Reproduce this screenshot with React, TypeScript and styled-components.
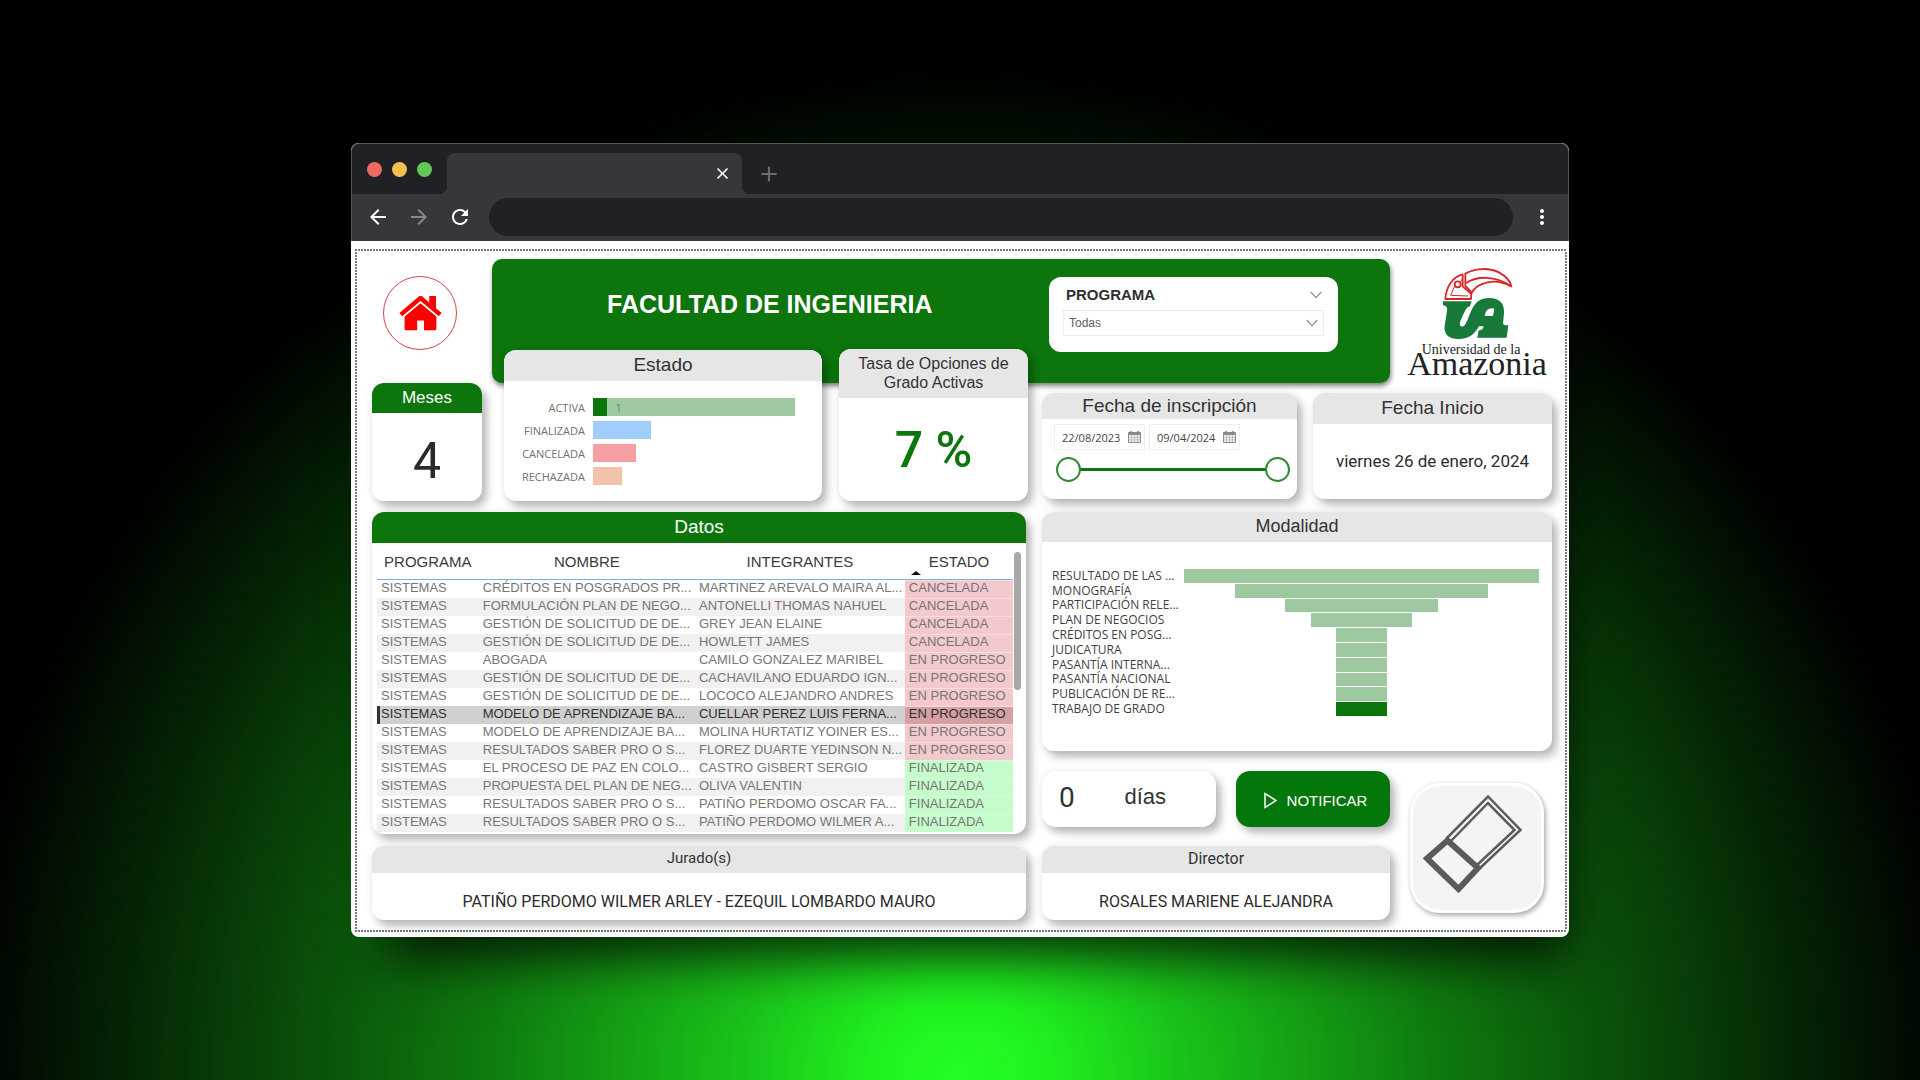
import React, { useState } from "react";
import styled, { createGlobalStyle, css } from "styled-components";
import { MdArrowBack, MdArrowForward, MdRefresh, MdMoreVert, MdClose, MdAdd } from "react-icons/md";

const SANS = `"Liberation Sans", Arial, sans-serif`;
const UI = `"Open Sans", "Noto Sans", sans-serif`;
const DIN = `Roboto, "Liberation Sans", sans-serif`;
const GREEN = "#0c750c";
const LIGHT_GREEN = "#9dc8a0";

const GlobalStyle = createGlobalStyle`
  * { box-sizing: border-box; }
  body { margin: 0; background: #000; font-family: ${SANS}; }
  button, input, select { font-family: inherit; margin: 0; padding: 0; border: 0; background: none; }
  button { cursor: pointer; }
`;

const Stage = styled.div`
  min-height: 100vh;
  display: flex;
  align-items: center;
  justify-content: center;
  background: radial-gradient(
    1000px 1010px at 50% 100%,
    #22ff22 0%,
    #20f320 8%,
    #19c019 23%,
    #0f7b0f 47%,
    #042404 84%,
    #000 100%
  );
`;

const Browser = styled.div`
  width: calc(100% - 64px);
  max-width: 1218px;
  border-radius: 8px;
  overflow: hidden;
  background: #fff;
  box-shadow: 16px 40px 50px -20px rgba(0, 0, 0, 0.8);
`;

const Chrome = styled.div`
  border: 1px solid #55565a;
  border-bottom: 0;
  border-radius: 8px 8px 0 0;
  background: #202124;
`;

const TabStrip = styled.div`
  height: 50px;
  padding-left: 15px;
  display: flex;
  align-items: flex-end;
`;

const Lights = styled.div`
  display: flex;
  gap: 10px;
  align-self: center;
  margin-right: 15px;
`;

const Light = styled.button<{ $color: string }>`
  width: 15px;
  height: 15px;
  border-radius: 50%;
  background: ${(p) => p.$color};
`;

const Tab = styled.div`
  position: relative;
  width: 295px;
  height: 41px;
  padding-right: 10px;
  display: flex;
  align-items: center;
  justify-content: flex-end;
  border-radius: 8px 8px 0 0;
  background: #36373a;
  &::before,
  &::after {
    content: "";
    position: absolute;
    bottom: 0;
    width: 8px;
    height: 8px;
  }
  &::before { left: -8px; background: radial-gradient(circle at 0 0, transparent 8px, #36373a 8px); }
  &::after { right: -8px; background: radial-gradient(circle at 100% 0, transparent 8px, #36373a 8px); }
`;

const ChromeButton = styled.button<{ $color?: string }>`
  display: flex;
  align-items: center;
  justify-content: center;
  color: ${(p) => p.$color ?? "#fff"};
`;

const NewTab = styled(ChromeButton)`
  height: 41px;
  margin-left: 14px;
`;

const Toolbar = styled.div`
  height: 47px;
  padding: 0 14px 2px;
  display: flex;
  align-items: center;
  gap: 17px;
  background: #36373a;
`;

const Address = styled.input`
  flex: 1;
  min-width: 0;
  height: 38px;
  padding: 0 18px;
  border-radius: 19px;
  background: #202124;
  color: #fff;
  outline: none;
`;

const Page = styled.main`
  padding: 8px 2px 5px 4px;
`;

const dotsX = "repeating-linear-gradient(90deg, #777 0 2px, #fff 2px 3px)";
const dotsY = "repeating-linear-gradient(180deg, #777 0 2px, #fff 2px 3px)";

const Report = styled.div`
  padding: 10px 15px 12px 17px;
  background:
    ${dotsX} top / 100% 2px no-repeat,
    ${dotsX} bottom / 100% 2px no-repeat,
    ${dotsY} left / 2px 100% no-repeat,
    ${dotsY} right / 2px 100% no-repeat,
    #fff;
`;

const Header = styled.header`
  display: grid;
  grid-template-columns: 96px 1fr 150px;
  align-items: start;
`;

const HomeButton = styled.button`
  width: 74px;
  height: 74px;
  margin: 17px auto 0;
  display: flex;
  align-items: center;
  justify-content: center;
  border: 1px solid #d9434c;
  border-radius: 50%;
  background: #fff;
`;

const shadow = css`
  box-shadow: 5px 6px 9px rgba(0, 0, 0, 0.26), 0 0 10px rgba(0, 0, 0, 0.07);
`;

const Banner = styled.div`
  height: 124px;
  margin: 0 12px 0 24px;
  padding: 18px 52px 0 115px;
  display: flex;
  justify-content: space-between;
  align-items: flex-start;
  border-radius: 10px;
  background: ${GREEN};
  box-shadow: 1px 3px 5px rgba(0, 0, 0, 0.5);
`;

const Title = styled.h1`
  margin: 12px 0 0;
  font-size: 25px;
  line-height: 30px;
  font-weight: 700;
  color: #fff;
`;

const Slicer = styled.div`
  width: 289px;
  height: 75px;
  padding: 8px 14px 0;
  border-radius: 12px;
  background: #fff;
`;

const SlicerTop = styled.div`
  height: 25px;
  padding: 0 2px 6px 3px;
  display: flex;
  align-items: center;
  justify-content: space-between;
  font-size: 15px;
  font-weight: 700;
  color: #2f2f2f;
`;

const SelectWrap = styled.div`
  display: grid;
  align-items: center;
  border: 1px solid #ececec;
  svg {
    grid-area: 1 / 1;
    justify-self: end;
    margin-right: 5px;
    pointer-events: none;
  }
`;

const Select = styled.select`
  grid-area: 1 / 1;
  width: 100%;
  height: 24px;
  padding-left: 5px;
  appearance: none;
  font-size: 12px;
  color: #606060;
`;

const Brand = styled.div`
  padding-top: 8px;
  display: flex;
  flex-direction: column;
  align-items: center;
  font-family: "Liberation Serif", "Times New Roman", serif;
  color: #222;
`;

const BrandSmall = styled.span`
  margin: 3px 12px 0 0;
  font-size: 14px;
  line-height: 16px;
`;

const BrandBig = styled.span`
  font-size: 34px;
  line-height: 12px;
`;

const Columns = styled.div`
  display: grid;
  grid-template-columns: 656fr 510fr;
  gap: 14px;
  margin-top: -34px;
`;

const Column = styled.div`
  min-width: 0;
  display: flex;
  flex-direction: column;
`;

const TopCards = styled.div<{ $gap: number; $height: number }>`
  height: ${(p) => p.$height}px;
  margin-bottom: ${(p) => 163 - p.$height}px;
  display: flex;
  align-items: flex-end;
  gap: ${(p) => p.$gap}px;
`;

const LowerLeft = styled.div`
  display: grid;
  gap: 12px;
  margin-right: 2px;
`;

const Card = styled.section<{ $grow?: number; $height: number; $indent?: number }>`
  flex: ${(p) => (p.$grow ? `${p.$grow} 1 0` : "none")};
  min-width: 0;
  height: ${(p) => p.$height}px;
  margin-left: ${(p) => p.$indent ?? 0}px;
  display: flex;
  flex-direction: column;
  border-radius: 12px;
  overflow: hidden;
  background: #fff;
  ${shadow}
`;

const CardTitle = styled.h2<{ $green?: boolean; $height?: number; $size?: number; $font?: string }>`
  flex: none;
  margin: 0;
  height: ${(p) => p.$height ?? 30}px;
  padding-bottom: 2px;
  display: flex;
  align-items: center;
  justify-content: center;
  text-align: center;
  font-family: ${(p) => p.$font ?? SANS};
  font-size: ${(p) => p.$size ?? 19}px;
  line-height: 19px;
  font-weight: 400;
  color: ${(p) => (p.$green ? "#fff" : "#333")};
  background: ${(p) => (p.$green ? GREEN : "#e6e6e6")};
`;

const Centered = styled.div<{ $size: number; $color?: string; $weight?: number; $drop?: number }>`
  flex: 1;
  display: flex;
  align-items: center;
  justify-content: center;
  padding-top: ${(p) => p.$drop ?? 0}px;
  font-family: ${DIN};
  font-size: ${(p) => p.$size}px;
  line-height: 1;
  font-weight: ${(p) => p.$weight ?? 400};
  color: ${(p) => p.$color ?? "#2b2b2b"};
  white-space: nowrap;
`;

const BarList = styled.ul`
  margin: 0;
  padding: 17px 27px 0 8px;
  list-style: none;
  display: grid;
  gap: 5px;
`;

const BarItem = styled.li`
  height: 18px;
  display: grid;
  grid-template-columns: 73px 1fr;
  gap: 8px;
  align-items: center;
  font-family: ${UI};
  font-size: 11px;
  color: #707070;
  text-align: right;
`;

const Bar = styled.div<{ $color: string }>`
  height: 18px;
  display: flex;
  align-items: center;
  text-align: left;
  color: #5d8761;
  background: ${(p) => p.$color};
`;

const BarHighlight = styled.span`
  height: 100%;
  margin-right: 8px;
  background: ${GREEN};
`;

const DateRow = styled.div`
  padding: 5px 12px 0;
  display: flex;
  gap: 4px;
`;

const DateBox = styled.div`
  width: 91px;
  height: 26px;
  padding: 0 3px 0 7px;
  display: flex;
  align-items: center;
  justify-content: space-between;
  border: 1px solid #efefef;
`;

const DateInput = styled.input`
  width: 64px;
  font-family: ${UI};
  font-size: 11px;
  color: #444;
  outline: none;
`;

const IconButton = styled.button`
  display: flex;
`;

const RangeWrap = styled.div`
  margin: 6px 7px 0 14px;
  height: 26px;
  display: grid;
  align-items: center;
  background: linear-gradient(${GREEN}, ${GREEN}) center / calc(100% - 30px) 3px no-repeat;
`;

const Range = styled.input`
  grid-area: 1 / 1;
  width: 100%;
  height: 26px;
  appearance: none;
  pointer-events: none;
  &::-webkit-slider-thumb {
    appearance: none;
    width: 25px;
    height: 25px;
    border: 2px solid #2f8a35;
    border-radius: 50%;
    background: #fff;
    pointer-events: auto;
  }
`;

const TableArea = styled.div`
  flex: 1;
  min-height: 0;
  padding: 0 5px 2px;
  display: flex;
  gap: 1px;
`;

const TableClip = styled.div`
  flex: 1;
  overflow: hidden;
`;

const Table = styled.table`
  width: 100%;
  table-layout: fixed;
  border-collapse: separate;
  border-spacing: 0;
  font-size: 13px;
  color: #767676;
`;

const Th = styled.th`
  position: relative;
  height: 37px;
  padding: 0;
  border-bottom: 1px solid #78b0de;
  font-size: 15px;
  font-weight: 400;
  color: #3a3a3a;
`;

const SortMark = styled.span`
  position: absolute;
  left: 6px;
  bottom: 4px;
  border: 5px solid transparent;
  border-top: 0;
  border-bottom: 4px solid #111;
`;

const Td = styled.td`
  height: 18px;
  padding: 0 0 2px 4px;
  line-height: 16px;
  white-space: nowrap;
`;

const Row = styled.tr<{ $selected: boolean }>`
  &:nth-child(even) { background: #f2f0f0; }
  ${(p) =>
    p.$selected &&
    css`
      && { background: #d0d0d0; color: #303030; }
      td:first-child { box-shadow: inset 3px 0 #333; }
    `}
`;

const StatusTd = styled(Td)<{ $tone: "red" | "green"; $selected: boolean }>`
  background: ${(p) => (p.$selected ? "#d5a0a2" : p.$tone === "red" ? "#f3c9cd" : "#c6fccb")};
  box-shadow: inset 0 1px ${(p) => (p.$tone === "red" ? "#f8dcdf" : "#d2fdd6")};
`;

const Thumb = styled.div`
  flex: none;
  width: 7px;
  height: 138px;
  margin-top: 9px;
  border-radius: 4px;
  background: #a8a8a8;
`;

const Funnel = styled.ul`
  margin: 0;
  padding: 27px 13px 0 10px;
  list-style: none;
  height: 174px;
  display: flex;
  flex-direction: column;
  gap: 1px;
`;

const FunnelItem = styled.li`
  flex: 1;
  min-height: 0;
  display: grid;
  grid-template-columns: 132px 1fr;
  align-items: center;
  font-family: ${UI};
  font-size: 12px;
  line-height: 12px;
  color: #3f3f3f;
  white-space: nowrap;
`;

const FunnelBar = styled.div<{ $strong: boolean }>`
  justify-self: center;
  height: 100%;
  background: ${(p) => (p.$strong ? GREEN : LIGHT_GREEN)};
`;

const LowerRight = styled.div`
  margin-top: 20px;
  display: grid;
  grid-template-columns: 1fr 162px;
`;

const LowerStack = styled.div`
  display: grid;
  gap: 19px;
`;

const ActionRow = styled.div`
  display: flex;
  justify-content: space-between;
`;

const Days = styled.div`
  width: 174px;
  height: 56px;
  padding: 0 50px 4px 17px;
  display: flex;
  align-items: center;
  justify-content: space-between;
  border-radius: 14px;
  background: #fff;
  font-size: 22px;
  color: #333;
  ${shadow}
`;

const DaysNumber = styled.span`
  font-family: ${DIN};
  font-size: 28px;
`;

const Notify = styled.button`
  width: 154px;
  height: 56px;
  padding: 3px 0 0 5px;
  display: flex;
  align-items: center;
  justify-content: center;
  gap: 10px;
  border-radius: 14px;
  background: #04770a;
  color: #fff;
  font-size: 15px;
  ${shadow}
`;

const EraserButton = styled.button`
  width: 134px;
  height: 130px;
  align-self: center;
  justify-self: end;
  margin: 4px 8px 0 0;
  padding: 0 8px 8px 0;
  display: flex;
  align-items: center;
  justify-content: center;
  border: 3px solid #fff;
  border-radius: 30px;
  background: #f4f4f4;
  box-shadow: 2px 3px 5px rgba(0, 0, 0, 0.28), 0 0 4px rgba(0, 0, 0, 0.1);
`;

const Chevron = () => (
  <svg width="12" height="8" viewBox="0 0 12 8" fill="none" stroke="#8a8a8a" strokeWidth="1.2">
    <path d="M.7 1 6 6.6 11.3 1" />
  </svg>
);

const Calendar = () => (
  <svg width="13" height="12" viewBox="0 0 13 12">
    <path d="M.5 1.5h12v10H.5z" fill="#f1f1f1" stroke="#8b8b8b" />
    <path d="M.5 1.5h12v2.4H.5z" fill="#8b8b8b" />
    <path d="M3 0v2M10 0v2" stroke="#777" strokeWidth="1.4" />
    <path d="M1 6.4h11M1 8.9h11M3.5 4v7M6.5 4v7M9.5 4v7" stroke="#b0b0b0" strokeWidth=".7" />
  </svg>
);

const House = () => (
  <svg width="43" height="36" viewBox="0 0 43 36" fill="#fe0000">
    <path d="M30.5 1h6.3v13l-6.3-6z" />
    <path d="M5.600 21.200 21.500 8l15.900 13.200v12.600c0 .9-.6 1.500-1.500 1.500H25V25.500h-6.800v9.800H7.100c-.9 0-1.500-.6-1.500-1.500z" />
    <path d="M2 20.200 21.500 4l19.500 16.200" fill="none" stroke="#fff" strokeWidth="6.500" strokeLinejoin="round" />
    <path d="M1.800 19.600 21.500 3l19.700 16.600" fill="none" stroke="#fe0000" strokeWidth="4.400" strokeLinejoin="round" />
    <path d="M30.500 1h6.300v13l-6.300-6z" />
  </svg>
);

const Toucan = () => (
  <svg width="71" height="72" viewBox="157 50 213 216">
    <g fill="none" stroke="#d9262b" strokeWidth="5.500" strokeLinejoin="round">
      <path d="M167 146C169 110 188 80 219 72v36l26 23-1 15z" />
      <circle cx="204" cy="102" r="9" />
      <path d="M213 94l6-10M195 107l-12 28 52 2" strokeWidth="3" />
      <path d="M227 70c32-18 74-18 102-3 22 12 33 26 36 41-32-16-64-18-90-6-14 6-23 14-28 25l-20-20z" />
      <path d="M230 98c34-22 86-22 132 8" />
    </g>
    <path
      fill="#17793a"
      fillRule="evenodd"
      d="M160 153h86l-5 15c-9 2-12 7-18 20-11 22-17 36-9 40 9 4 14-8 20-20 12-28 20-64 62-65 36-1 49 18 47 46l-3 29c0 5 3 7 16 7l-5 37h-88l4-22c9 0 12-2 15-12h-14c-14 24-28 38-62 38-30 0-44-14-41-40l7-44c2-10-2-16-12-17zM285 197c3-18 13-27 29-22l-4 22z"
    />
  </svg>
);

const Eraser = () => (
  <svg width="100" height="100" viewBox="1423 795 100 100" fill="none" stroke="#5b5b5b">
    <path d="M1446 840 1488 797.500 1520.500 831 1479 870" strokeWidth="2.500" />
    <path d="M1450 843 1488 804 1514.500 831 1477 866" strokeWidth="2.500" />
    <path d="M1447.500 841.500 1427 859.500 1458.500 890 1478 869z" strokeWidth="6" />
  </svg>
);

const states = [
  { name: "ACTIVA", value: 14, color: LIGHT_GREEN, active: 1 },
  { name: "FINALIZADA", value: 4, color: "#a2cefc" },
  { name: "CANCELADA", value: 3, color: "#f69fa3" },
  { name: "RECHAZADA", value: 2, color: "#f2c2aa" },
];

const modes: [string, number][] = [
  ["RESULTADO DE LAS ...", 7],
  ["MONOGRAFÍA", 5],
  ["PARTICIPACIÓN RELE...", 3],
  ["PLAN DE NEGOCIOS", 2],
  ["CRÉDITOS EN POSG...", 1],
  ["JUDICATURA", 1],
  ["PASANTÍA INTERNA...", 1],
  ["PASANTÍA NACIONAL", 1],
  ["PUBLICACIÓN DE RE...", 1],
  ["TRABAJO DE GRADO", 1],
];

const records: [string, string, string][] = [
  ["CRÉDITOS EN POSGRADOS PR...", "MARTINEZ AREVALO MAIRA AL...", "CANCELADA"],
  ["FORMULACIÓN PLAN DE NEGO...", "ANTONELLI THOMAS NAHUEL", "CANCELADA"],
  ["GESTIÓN DE SOLICITUD DE DE...", "GREY JEAN ELAINE", "CANCELADA"],
  ["GESTIÓN DE SOLICITUD DE DE...", "HOWLETT JAMES", "CANCELADA"],
  ["ABOGADA", "CAMILO GONZALEZ MARIBEL", "EN PROGRESO"],
  ["GESTIÓN DE SOLICITUD DE DE...", "CACHAVILANO EDUARDO IGN...", "EN PROGRESO"],
  ["GESTIÓN DE SOLICITUD DE DE...", "LOCOCO ALEJANDRO ANDRES", "EN PROGRESO"],
  ["MODELO DE APRENDIZAJE BA...", "CUELLAR PEREZ LUIS FERNA...", "EN PROGRESO"],
  ["MODELO DE APRENDIZAJE BA...", "MOLINA HURTATIZ YOINER ES...", "EN PROGRESO"],
  ["RESULTADOS SABER PRO O S...", "FLOREZ DUARTE YEDINSON N...", "EN PROGRESO"],
  ["EL PROCESO DE PAZ EN COLO...", "CASTRO GISBERT SERGIO", "FINALIZADA"],
  ["PROPUESTA DEL PLAN DE NEG...", "OLIVA VALENTIN", "FINALIZADA"],
  ["RESULTADOS SABER PRO O S...", "PATIÑO PERDOMO OSCAR FA...", "FINALIZADA"],
  ["RESULTADOS SABER PRO O S...", "PATIÑO PERDOMO WILMER A...", "FINALIZADA"],
];

export default function App() {
  const [selected, setSelected] = useState(7);
  return (
    <>
      <GlobalStyle />
      <Stage>
        <Browser>
          <Chrome>
            <TabStrip>
              <Lights>
                <Light $color="#ed6a5e" aria-label="Cerrar" />
                <Light $color="#f5bf4f" aria-label="Minimizar" />
                <Light $color="#62c554" aria-label="Maximizar" />
              </Lights>
              <Tab>
                <ChromeButton aria-label="Cerrar pestaña"><MdClose size={19} /></ChromeButton>
              </Tab>
              <NewTab $color="#6b6c6f" aria-label="Nueva pestaña"><MdAdd size={26} /></NewTab>
            </TabStrip>
            <Toolbar>
              <ChromeButton aria-label="Atrás"><MdArrowBack size={24} /></ChromeButton>
              <ChromeButton $color="#86878a" aria-label="Adelante"><MdArrowForward size={24} /></ChromeButton>
              <ChromeButton aria-label="Recargar"><MdRefresh size={24} /></ChromeButton>
              <Address type="text" aria-label="Dirección" />
              <ChromeButton aria-label="Menú"><MdMoreVert size={24} /></ChromeButton>
            </Toolbar>
          </Chrome>
          <Page>
            <Report>
              <Header>
                <HomeButton aria-label="Inicio"><House /></HomeButton>
                <Banner>
                  <Title>FACULTAD DE INGENIERIA</Title>
                  <Slicer>
                    <SlicerTop>
                      <label htmlFor="programa">PROGRAMA</label>
                      <Chevron />
                    </SlicerTop>
                    <SelectWrap>
                      <Select id="programa"><option>Todas</option></Select>
                      <Chevron />
                    </SelectWrap>
                  </Slicer>
                </Banner>
                <Brand>
                  <Toucan />
                  <BrandSmall>Universidad de la</BrandSmall>
                  <BrandBig>Amazonia</BrandBig>
                </Brand>
              </Header>
              <Columns>
                <Column>
                  <TopCards $gap={17} $height={152}>
                    <Card $grow={110} $height={118}>
                      <CardTitle $green $size={17}>Meses</CardTitle>
                      <Centered $size={50} $drop={8}>4</Centered>
                    </Card>
                    <Card $grow={318} $height={151} $indent={5}>
                      <CardTitle $height={31}>Estado</CardTitle>
                      <BarList>
                        {states.map((s) => (
                          <BarItem key={s.name}>
                            <span>{s.name}</span>
                            <Bar $color={s.color} style={{ width: `${(s.value / 14) * 100}%` }}>
                              {s.active && (
                                <>
                                  <BarHighlight style={{ width: `${(s.active / 14) * 100}%` }} />
                                  {s.active}
                                </>
                              )}
                            </Bar>
                          </BarItem>
                        ))}
                      </BarList>
                    </Card>
                    <Card $grow={189} $height={152}>
                      <CardTitle $height={49} $size={16}>Tasa de Opciones de<br />Grado Activas</CardTitle>
                      <Centered $size={50} $color={GREEN} $weight={500}>7 %</Centered>
                    </Card>
                  </TopCards>
                  <LowerLeft>
                    <Card $height={322}>
                      <CardTitle $green $height={31}>Datos</CardTitle>
                      <TableArea>
                        <TableClip>
                          <Table>
                            <colgroup>
                              <col style={{ width: "16%" }} />
                              <col style={{ width: "34%" }} />
                              <col style={{ width: "33%" }} />
                              <col style={{ width: "17%" }} />
                            </colgroup>
                            <thead>
                              <tr>
                                <Th>PROGRAMA</Th>
                                <Th>NOMBRE</Th>
                                <Th>INTEGRANTES</Th>
                                <Th><SortMark />ESTADO</Th>
                              </tr>
                            </thead>
                            <tbody>
                              {records.map(([name, people, status], i) => (
                                <Row key={i} $selected={i === selected} onClick={() => setSelected(i)}>
                                  <Td>SISTEMAS</Td>
                                  <Td>{name}</Td>
                                  <Td>{people}</Td>
                                  <StatusTd $tone={status === "FINALIZADA" ? "green" : "red"} $selected={i === selected}>
                                    {status}
                                  </StatusTd>
                                </Row>
                              ))}
                            </tbody>
                          </Table>
                        </TableClip>
                        <Thumb />
                      </TableArea>
                    </Card>
                    <Card $height={74}>
                      <CardTitle $height={27} $size={15} $font={DIN}>Jurado(s)</CardTitle>
                      <Centered $size={16} $drop={10}>PATIÑO PERDOMO WILMER ARLEY - EZEQUIL LOMBARDO MAURO</Centered>
                    </Card>
                  </LowerLeft>
                </Column>
                <Column>
                  <TopCards $gap={16} $height={150}>
                    <Card $grow={255} $height={106}>
                      <CardTitle $height={26}>Fecha de inscripción</CardTitle>
                      <DateRow>
                        <DateBox>
                          <DateInput type="text" aria-label="Fecha inicial" defaultValue="22/08/2023" />
                          <IconButton aria-label="Elegir fecha inicial"><Calendar /></IconButton>
                        </DateBox>
                        <DateBox>
                          <DateInput type="text" aria-label="Fecha final" defaultValue="09/04/2024" />
                          <IconButton aria-label="Elegir fecha final"><Calendar /></IconButton>
                        </DateBox>
                      </DateRow>
                      <RangeWrap>
                        <Range type="range" aria-label="Desde" min={0} max={100} defaultValue={0} />
                        <Range type="range" aria-label="Hasta" min={0} max={100} defaultValue={100} />
                      </RangeWrap>
                    </Card>
                    <Card $grow={239} $height={106}>
                      <CardTitle $height={31}>Fecha Inicio</CardTitle>
                      <Centered $size={17}>viernes 26 de enero, 2024</Centered>
                    </Card>
                  </TopCards>
                  <Card $height={239}>
                    <CardTitle $size={18}>Modalidad</CardTitle>
                    <Funnel>
                      {modes.map(([name, value], i) => (
                        <FunnelItem key={name}>
                          <span>{name}</span>
                          <FunnelBar $strong={i === modes.length - 1} style={{ width: `${(value / 7) * 100}%` }} />
                        </FunnelItem>
                      ))}
                    </Funnel>
                  </Card>
                  <LowerRight>
                    <LowerStack>
                      <ActionRow>
                        <Days><DaysNumber>0</DaysNumber>días</Days>
                        <Notify>
                          <svg width="13" height="17" viewBox="0 0 13 17" fill="none" stroke="#fff" strokeWidth="1.500">
                            <path d="M1 1.500v14l11-7z" />
                          </svg>
                          NOTIFICAR
                        </Notify>
                      </ActionRow>
                      <Card $height={74}>
                        <CardTitle $height={27} $size={16} $font={DIN}>Director</CardTitle>
                        <Centered $size={16} $drop={10}>ROSALES MARIENE ALEJANDRA</Centered>
                      </Card>
                    </LowerStack>
                    <EraserButton aria-label="Borrar filtros"><Eraser /></EraserButton>
                  </LowerRight>
                </Column>
              </Columns>
            </Report>
          </Page>
        </Browser>
      </Stage>
    </>
  );
}
